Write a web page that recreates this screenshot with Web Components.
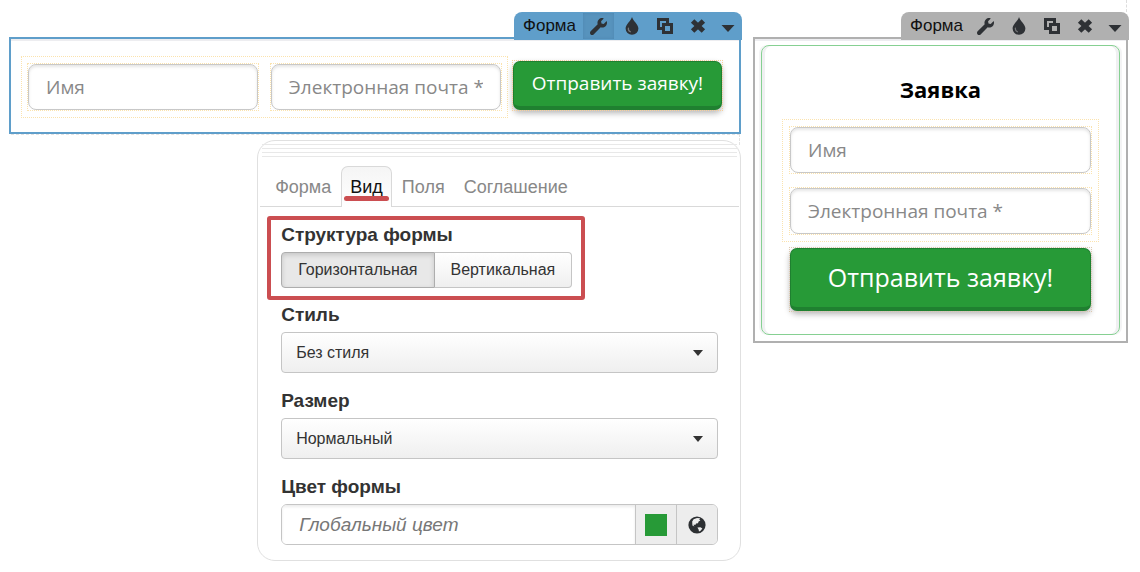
<!DOCTYPE html>
<html lang="ru">
<head>
<meta charset="utf-8">
<title>Редактор формы</title>
<style>
  html { min-height: 100%; background: #fff; }
  body { margin: 0; color: #333; font-family: "Liberation Sans", Arial, sans-serif; }
</style>
</head>
<body>
<editor-page>
  <form-frame slot="left" active>
    <form-fields>
      <text-field label="Имя"></text-field>
      <text-field label="Электронная почта *"></text-field>
    </form-fields>
    <send-button>Отправить заявку!</send-button>
  </form-frame>
  <settings-panel slot="left"></settings-panel>
  <form-frame slot="right">
    <form-card>
      <span slot="title">Заявка</span>
      <form-fields vertical>
        <text-field label="Имя"></text-field>
        <text-field label="Электронная почта *"></text-field>
      </form-fields>
      <send-button large>Отправить заявку!</send-button>
    </form-card>
  </form-frame>
</editor-page>

<script>
const define = (name, html, setup) => {
  const template = document.createElement('template');
  template.innerHTML = html;
  customElements.define(name, class extends HTMLElement {
    constructor() {
      super();
      this.attachShadow({ mode: 'open' }).append(template.content.cloneNode(true));
    }
    connectedCallback() { if (setup) setup(this, this.shadowRoot); }
  });
};

define('editor-page', `
<style>
  :host { display: grid; grid-template-columns: 732fr 375fr; gap: 12px; align-items: start;
    padding: 12px 12px 11px 9px; position: relative; }
  :host::before { content: ""; position: absolute; top: 0; right: 13px; height: 12px; border-left: 1px dashed #ddd; }
  .column { min-width: 0; }
</style>
<main class="column"><slot name="left"></slot></main>
<aside class="column"><slot name="right"></slot></aside>`);

define('form-toolbar', `
<style>
  :host { display: flex; width: max-content; height: 28px; box-sizing: border-box; align-items: center; gap: 2px;
    padding: 0 2px 0 9px; border-radius: 8px 8px 0 0; background: var(--frame-color); color: #111; }
  .name { font-size: 17px; line-height: 28px; padding-right: 5px; }
  button { width: 31px; height: 26px; padding: 0; border: 0; background: none; color: #2e3135;
    display: grid; place-items: center; }
  button:last-child { width: 25px; }
  :host([active]) button.tool { background: #5793bd; box-shadow: inset 0 0 3px #4d86b0; }
  svg { display: block; }
</style>
<span class="name">Форма</span>
<button class="tool" aria-label="Настройки"><svg width="17" height="17" viewBox="0 0 512 512" fill="currentColor"><path d="M507.73 109.1c-2.24-9.03-13.54-12.09-20.12-5.51l-74.36 74.36-67.88-11.31-11.31-67.88 74.36-74.36c6.62-6.62 3.43-17.9-5.66-20.16-47.38-11.74-99.55.91-136.58 37.93-39.64 39.64-50.55 97.1-34.05 147.2L18.74 402.76c-24.99 24.99-24.99 65.51 0 90.5 24.99 24.99 65.51 24.99 90.5 0l213.21-213.21c50.12 16.71 107.47 5.68 147.37-34.22 37.07-37.07 49.7-89.32 37.91-136.73z"/></svg></button>
<button aria-label="Цвет"><svg width="14" height="18" viewBox="0 0 14 18"><path fill="currentColor" d="M7 0C7.8 3.6 13.4 7.4 13.4 11.5A6.4 6.2 0 0 1 .6 11.5C.6 7.4 6.2 3.6 7 0z"/><path d="M3.4 11c-.3 2 .5 3.2 2 3.8" fill="none" stroke="#fff" stroke-opacity=".35" stroke-width="1.2" stroke-linecap="round"/></svg></button>
<button aria-label="Копировать"><svg width="16" height="16" viewBox="0 0 16 16" fill="none" stroke="currentColor"><path d="M5 10.5H1.5V1.5H10.5V5" stroke-width="3"/><path d="M6.5 6.5H14.5V14.5H6.5z" stroke-width="3"/></svg></button>
<button aria-label="Удалить"><svg width="16" height="16" viewBox="0 0 16 16"><path d="M2.6 3 13.4 13M13.4 3 2.6 13" stroke="currentColor" stroke-width="5"/></svg></button>
<button aria-label="Ещё"><svg width="14" height="12" viewBox="0 0 14 12"><path d="M.5 5h13L7 12z" fill="currentColor"/></svg></button>`);

define('form-frame', `
<style>
  :host { --frame-color: #b0b0b0; display: block; }
  :host([active]) { --frame-color: #5f9eca; }
  form-toolbar { position: relative; z-index: 1; margin: 0 -1px -3px auto; }
  .box { border: 2px solid var(--frame-color); padding: 6px; box-shadow: inset 0 2px #ededf0; }
  :host([active]) .box { position: relative; display: flex; align-items: flex-start; gap: 5px; padding: 17px 17px 14px 10px; }
  :host([active]) .box::after { content: ""; position: absolute; left: 0; right: -1px; top: 100%; height: 10px;
    margin-top: 2px; border: 0 dashed #e2e2e2; border-width: 1px 1px 0 0; }
</style>
<form-toolbar></form-toolbar>
<div class="box"><slot></slot></div>`, (host, root) => {
  root.querySelector('form-toolbar').toggleAttribute('active', host.hasAttribute('active'));
});

define('form-fields', `
<style>
  :host { display: flex; flex: 1; gap: 13px; padding: 7px 6px; border: 1px dotted #fbe3ae; }
  :host([vertical]) { flex-direction: column; gap: 15px; padding: 7px; }
</style>
<slot></slot>`);

define('text-field', `
<style>
  :host { display: block; flex: 1; min-width: 0; outline: 1px dotted #fbe3ae; }
  input { display: block; box-sizing: border-box; width: 100%; height: 46px; padding: 0 17px; border: 1px solid #c8c8c8;
    border-radius: 8px; background: #fff; box-shadow: inset 0 2px 3px #0000001a; color: #333; outline: 0;
    font: 19px "Open Sans", sans-serif; }
  input::placeholder { color: #888; opacity: 1; }
</style>
<input type="text">`, (host, root) => {
  const input = root.querySelector('input');
  input.placeholder = host.getAttribute('label');
  input.setAttribute('aria-label', host.getAttribute('label'));
});

define('send-button', `
<style>
  :host { display: block; margin-top: 5px; outline: 1px dotted #f8cf9c; }
  button { display: block; width: 100%; height: 49px; padding: 0 18px 2px; border: 1px solid #1f8030; border-bottom-width: 4px;
    border-radius: 7px; background: #279a37; color: #fff; box-shadow: 0 3px 6px #0000004d;
    font: 19px "Open Sans", sans-serif; white-space: nowrap; }
  :host([large]) { margin: 6px 8px 0; outline-color: #ddc9b0; }
  :host([large]) button { height: 63px; font-size: 25px; }
</style>
<button type="button"><slot></slot></button>`);

define('form-card', `
<style>
  :host { display: block; padding: 27px 20px 23px; border: 1px solid #86d092; border-radius: 8px;
    box-shadow: inset 3px 0 #f0f0f2, inset -3px 0 #f0f0f2, 2px 0 #f4f4f5, -2px 0 #f4f4f5; }
  h2 { margin: 0 0 14px; font: bold 22px/32px "Open Sans", sans-serif; color: #000; text-align: center; }
</style>
<h2><slot name="title"></slot></h2>
<slot></slot>`);

define('tab-list', `
<style>
  :host { display: block; margin: 9px 1px 0 2px; border-bottom: 1px solid #d9d9d9; }
  nav { display: flex; gap: 1px; padding-left: 6px; margin-bottom: -1px; }
  a { position: relative; padding: 0 8px; border: 1px solid transparent; border-bottom: 0; border-radius: 7px 7px 0 0;
    font-size: 18px; line-height: 40px; color: #888; text-decoration: none; }
  a[aria-current] { color: #111; border-color: #d9d9d9; background: linear-gradient(#f5f5f5, #fff); }
  a[aria-current]::after { content: ""; position: absolute; left: 2px; right: 2px; bottom: 6px; height: 5px;
    border-radius: 3px; background: #cb4e51; }
</style>
<nav><a href="#form">Форма</a><a href="#view" aria-current="page">Вид</a><a href="#fields">Поля</a><a href="#consent">Соглашение</a></nav>`);

const labelStyle = `
  .label { display: block; margin: 0 0 5px; font-weight: bold; font-size: 19px; line-height: 25px; color: #333; }`;

define('segment-field', `
<style>
  :host { display: block; width: max-content; padding: 2px 9px 8px 10px; border: 4px solid #cb4e51; border-radius: 3px; }
  ${labelStyle}
  .buttons { display: flex; }
  button { height: 36px; padding: 0 16px; border: 1px solid #c5c5c5; font: 16px "Liberation Sans", Arial, sans-serif;
    color: #333; background: linear-gradient(#fff, #efefef); }
  button:first-child { border-radius: 4px 0 0 4px; }
  button:last-child { border-left: 0; border-radius: 0 4px 4px 0; }
  button[aria-pressed="true"] { background: #e8e8e8; border-color: #adadad; box-shadow: inset 0 2px 5px #00000026; }
</style>
<div role="group" aria-labelledby="label">
  <span class="label" id="label">Структура формы</span>
  <div class="buttons">
    <button type="button" aria-pressed="true">Горизонтальная</button>
    <button type="button" aria-pressed="false">Вертикальная</button>
  </div>
</div>`);

define('select-field', `
<style>
  :host { display: block; }
  ${labelStyle}
  .wrap { position: relative; }
  select { appearance: none; display: block; box-sizing: border-box; width: 100%; height: 41px; padding: 0 34px 0 14px;
    border: 1px solid #c5c5c5; border-radius: 4px; background: linear-gradient(#fff, #efefef); color: #333;
    font: 16px "Liberation Sans", Arial, sans-serif; }
  .wrap::after { content: ""; position: absolute; right: 15px; top: 18px; border: 5px solid transparent;
    border-top: 6px solid #333; border-bottom: 0; pointer-events: none; }
</style>
<label class="label" for="select"></label>
<div class="wrap"><select id="select"><option></option></select></div>`, (host, root) => {
  root.querySelector('label').textContent = host.getAttribute('label');
  root.querySelector('option').textContent = host.getAttribute('value');
});

define('color-field', `
<style>
  :host { display: block; }
  ${labelStyle}
  .row { display: flex; height: 41px; box-sizing: border-box; border: 1px solid #c5c5c5; border-radius: 6px; overflow: hidden; }
  input { flex: 1; min-width: 0; padding: 0 17px; border: 0; outline: 0; background: #fff; box-shadow: inset 0 2px 3px #00000014;
    font: italic 19px "Liberation Sans", Arial, sans-serif; }
  input::placeholder { color: #777; opacity: 1; }
  button { width: 41px; padding: 0; border: 0; border-left: 1px solid #c5c5c5; background: #ededed; display: grid; place-items: center; }
  .swatch { width: 22px; height: 22px; background: #279a37; }
  svg { display: block; }
</style>
<label class="label" for="color">Цвет формы</label>
<div class="row">
  <input id="color" type="text" placeholder="Глобальный цвет">
  <button type="button" aria-label="Выбрать цвет"><span class="swatch"></span></button>
  <button type="button" aria-label="Глобальные цвета"><svg width="18" height="18" viewBox="0 0 18 18"><circle cx="9" cy="9" r="8.6" fill="#2d3033"/><path fill="#ededed" d="M5.6 3.2 9 1.9 12.2 2.2 11.2 3.6 12.4 4.6 10.6 5.6 10 7.2 8 7.6 7.6 8.8 5.4 8.8 6.4 10.4 4.4 9.6 4.2 5.6z"/><path fill="#ededed" d="M9.4 11.4 12.4 11.2 14.4 12.4 12.6 14.8 11 15.6 10.6 13.4z"/></svg></button>
</div>`);

define('settings-panel', `
<style>
  :host { display: block; width: 66.1%; box-sizing: border-box; margin: 6px 0 0 auto; border: 1px solid #e0e0e0;
    border-radius: 18px; background: #fff; position: relative; }
  .grip { height: 13px; margin: 3px 3px 0 4px; background: repeating-linear-gradient(#e8e8e8 0 1px, transparent 1px 4px); }
  .body { display: flex; flex-direction: column; gap: 15px; padding: 9px 22px 15px 23px; }
  segment-field { margin: 0 0 -13px -14px; }
</style>
<div class="grip"></div>
<tab-list></tab-list>
<div class="body">
  <segment-field></segment-field>
  <select-field label="Стиль" value="Без стиля"></select-field>
  <select-field label="Размер" value="Нормальный"></select-field>
  <color-field></color-field>
</div>`);
</script>
</body>
</html>
